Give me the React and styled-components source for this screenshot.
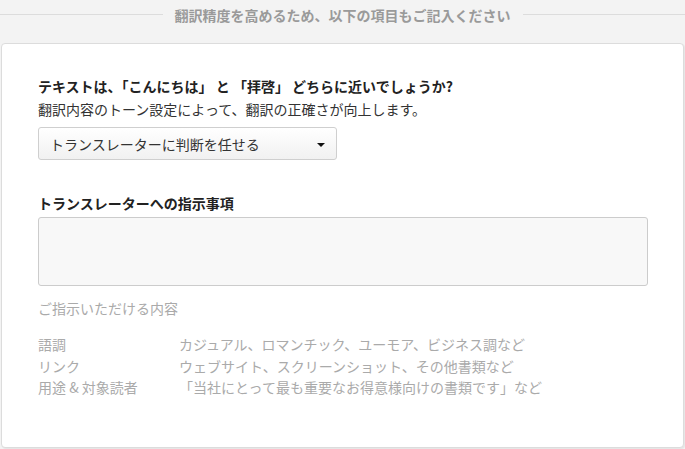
import React from "react";
import styled, { createGlobalStyle } from "styled-components";

const GlobalStyle = createGlobalStyle`
  html, body {
    margin: 0;
    padding: 0;
    background: #f3f3f3;
  }
  body {
    font-family: "Noto Sans CJK JP", "Noto Sans", sans-serif;
    color: #333;
  }
`;

const hints = [
  { label: "語調", text: "カジュアル、ロマンチック、ユーモア、ビジネス調など" },
  { label: "リンク", text: "ウェブサイト、スクリーンショット、その他書類など" },
  { label: "用途 & 対象読者", text: "「当社にとって最も重要なお得意様向けの書類です」など" },
];

function App() {
  return (
    <Page>
      <GlobalStyle />
      <Divider>
        <span>翻訳精度を高めるため、以下の項目もご記入ください</span>
      </Divider>
      <Card>
        <Question>テキストは、「こんにちは」 と 「拝啓」 どちらに近いでしょうか?</Question>
        <Help>翻訳内容のトーン設定によって、翻訳の正確さが向上します。</Help>
        <Select>
          <span>トランスレーターに判断を任せる</span>
          <Caret />
        </Select>
        <Label>トランスレーターへの指示事項</Label>
        <TextArea />
        <Note>ご指示いただける内容</Note>
        <HintList>
          {hints.map((h) => (
            <React.Fragment key={h.label}>
              <dt>{h.label}</dt>
              <dd>{h.text}</dd>
            </React.Fragment>
          ))}
        </HintList>
      </Card>
    </Page>
  );
}

const Page = styled.div`
  width: 685px;
  height: 449px;
  display: flex;
  flex-direction: column;
  overflow: hidden;
`;

const Divider = styled.div`
  display: flex;
  align-items: center;
  gap: 12px;
  height: 29px;
  margin-bottom: 14px;
  color: #9a9a9a;
  font-size: 14px;
  font-weight: 700;
  &::before,
  &::after {
    content: "";
    flex: 1;
    height: 1px;
    background: #dcdcdc;
  }
`;

const Card = styled.div`
  margin: 0 1px 1px 1px;
  flex: 1;
  background: #fff;
  border: 1px solid #dcdcdc;
  border-radius: 4px;
  box-shadow: 1px 1px 1px rgba(0, 0, 0, 0.06);
  padding: 32px 36px 0 36px;
`;

const Question = styled.div`
  font-size: 14px;
  font-weight: 700;
  color: #222;
  line-height: 20px;
`;

const Help = styled.div`
  font-size: 14px;
  line-height: 20px;
  margin-top: 3px;
  color: #333;
`;

const Select = styled.div`
  margin-top: 8px;
  width: 299px;
  height: 33px;
  box-sizing: border-box;
  border: 1px solid #cfcfcf;
  border-radius: 3px;
  background: linear-gradient(#ffffff, #f1f1f1);
  display: flex;
  align-items: center;
  justify-content: space-between;
  padding: 0 11px 0 11px;
  font-size: 14px;
  color: #333;
`;

const Caret = styled.i`
  width: 0;
  height: 0;
  border-left: 4px solid transparent;
  border-right: 4px solid transparent;
  border-top: 4px solid #111;
  margin-top: 2px;
`;

const Label = styled.div`
  margin-top: 33px;
  font-size: 14px;
  font-weight: 700;
  color: #222;
  line-height: 20px;
`;

const TextArea = styled.div`
  margin-top: 4px;
  width: 610px;
  height: 69px;
  box-sizing: border-box;
  background: #f8f8f8;
  border: 1px solid #cccccc;
  border-radius: 3px;
`;

const Note = styled.div`
  margin-top: 12px;
  font-size: 14px;
  color: #aaa;
  line-height: 20px;
`;

const HintList = styled.dl`
  margin: 16px 0 0 0;
  display: grid;
  grid-template-columns: 141px 1fr;
  row-gap: 1.5px;
  font-size: 14px;
  line-height: 20px;
  color: #aaa;
  dt, dd {
    margin: 0;
  }
`;

export default App;
